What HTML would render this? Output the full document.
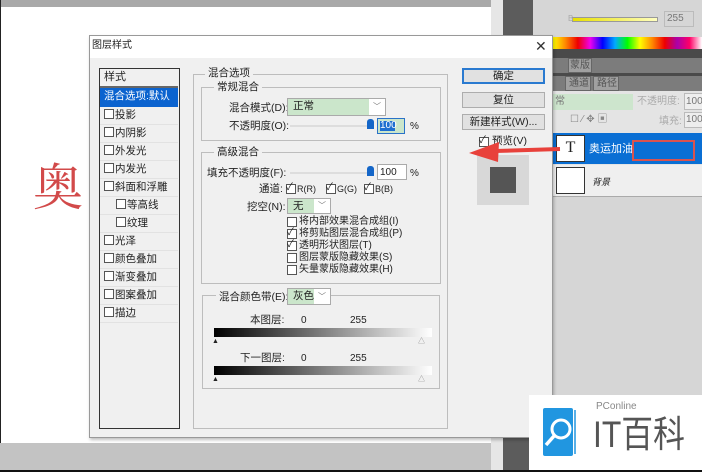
<!DOCTYPE html>
<html><head><meta charset="utf-8"><style>
*{margin:0;padding:0;box-sizing:border-box}
body{width:702px;height:472px;overflow:hidden;position:relative;background:#c9c9c9;font-family:"Liberation Sans","Noto Sans CJK SC",sans-serif;font-size:10px;color:#222}
.a{position:absolute}
.t{position:absolute;white-space:nowrap;font-size:10px;line-height:12px}
.cb{position:absolute;width:10px;height:10px;border:1px solid #555;background:#fff}
.grp{position:absolute;border:1px solid #bdbdbd}
.lbl{position:absolute;background:#f0f0f0;padding:0 3px;font-size:10.5px;line-height:12px;white-space:nowrap}
.btn{position:absolute;left:462px;width:83px;height:16px;border:1px solid #adadad;background:#e1e1e1;text-align:center;font-size:10.5px;line-height:14px}
.row{position:absolute;left:0;width:78px;height:18px;border-bottom:1px solid #e2e2e2;font-size:10.5px;line-height:17px;padding-left:4px;white-space:nowrap}
.row i{display:inline-block;width:10px;height:10px;border:1px solid #555;background:#fff;vertical-align:-1px;margin-right:1px}
.dd{position:absolute;background:#cbe6cb;border:1px solid #aaa;font-size:10.5px;line-height:15px;padding-left:5px}
.dd b{position:absolute;right:0;top:0;width:16px;height:100%;background:#fff;font-weight:normal;color:#777;font-size:8px;text-align:center}
</style></head><body>
<div class="a" style="left:0;top:0;width:702px;height:7px;background:#a9a9a9"></div>
<div class="a" style="left:1px;top:7px;width:490px;height:436px;background:#fff"></div>
<div class="a" style="left:0;top:0;width:1px;height:472px;background:#222"></div>
<div class="a" style="left:0;top:443px;width:530px;height:28px;background:#c3c3c3"></div>
<div class="a" style="left:491px;top:0;width:12px;height:472px;background:#e6e6e6"></div>
<div class="a" style="left:503px;top:0;width:30px;height:472px;background:#5c5c5c"></div>
<div class="t" style="left:33px;top:158px;font-size:50px;line-height:60px;color:#d24a4a;font-family:'Liberation Serif','Noto Serif CJK SC',serif">奥</div>
<div class="a" style="left:533px;top:0;width:169px;height:472px;background:#d6d6d6"></div>
<div class="a" style="left:572px;top:17px;width:86px;height:5px;background:linear-gradient(90deg,#e8e000,#ffffc0);border:1px solid #999"></div>
<div class="t" style="left:568px;top:13px;color:#aaa;font-size:8px">B</div>
<div class="a" style="left:664px;top:11px;width:30px;height:16px;border:1px solid #bbb"></div>
<div class="t" style="left:667px;top:13px;color:#777">255</div>
<div class="a" style="left:553px;top:37px;width:149px;height:12px;background:linear-gradient(90deg,#ff0,#f80,#e00,#e0e,#00f,#0af,#0f0,#ff0,#f80,#e00,#a0a,#f06,#fff)"></div>
<div class="a" style="left:553px;top:49px;width:149px;height:9px;background:#4a4a4a"></div>
<div class="a" style="left:553px;top:58px;width:149px;height:15px;background:#7c7c7c"></div>
<div class="a" style="left:568px;top:58px;width:24px;height:15px;background:#a0a0a0;border:1px solid #666"></div>
<div class="t" style="left:570px;top:60px;color:#555">蒙版</div>
<div class="a" style="left:553px;top:73px;width:149px;height:3px;background:#4a4a4a"></div>
<div class="a" style="left:553px;top:76px;width:149px;height:15px;background:#7c7c7c"></div>
<div class="a" style="left:565px;top:76px;width:26px;height:15px;background:#a0a0a0;border:1px solid #666"></div>
<div class="a" style="left:593px;top:76px;width:26px;height:15px;background:#a0a0a0;border:1px solid #666"></div>
<div class="t" style="left:569px;top:78px;color:#555">通道</div>
<div class="t" style="left:597px;top:78px;color:#555">路径</div>
<div class="a" style="left:553px;top:91px;width:149px;height:106px;background:#e4e4e4"></div>
<div class="a" style="left:553px;top:94px;width:80px;height:16px;background:#cde5cd"></div>
<div class="t" style="left:555px;top:96px;color:#777">常</div>
<div class="t" style="left:637px;top:96px;color:#aaa">不透明度:</div>
<div class="a" style="left:684px;top:93px;width:20px;height:17px;border:1px solid #bbb;background:#eee"></div>
<div class="t" style="left:686px;top:96px;color:#777">100</div>
<div class="t" style="left:570px;top:114px;color:#888">☐ ⁄ ✥ ▣</div>
<div class="t" style="left:659px;top:116px;color:#aaa">填充:</div>
<div class="a" style="left:684px;top:112px;width:20px;height:16px;border:1px solid #bbb;background:#eee"></div>
<div class="t" style="left:686px;top:114px;color:#777">100</div>
<div class="a" style="left:553px;top:133px;width:149px;height:31px;background:#0a6fd4"></div>
<div class="a" style="left:556px;top:135px;width:29px;height:27px;background:#fff;border:1px solid #333;text-align:center;font-family:'Liberation Serif',serif;font-size:16px;line-height:24px">T</div>
<div class="t" style="left:589px;top:143px;color:#fff;font-size:11px">奥运加油</div>
<div class="a" style="left:632px;top:140px;width:63px;height:21px;border:2px solid #d9534f"></div>
<div class="a" style="left:553px;top:165px;width:149px;height:32px;background:#efefef;border-bottom:1px solid #aaa"></div>
<div class="a" style="left:556px;top:167px;width:29px;height:27px;background:#fff;border:1px solid #333"></div>
<div class="t" style="left:592px;top:176px;font-style:italic;font-size:9px">背景</div>
<div class="a" style="left:89px;top:35px;width:464px;height:403px;background:#f0f0f0;border:1px solid #999;box-shadow:1px 2px 3px rgba(0,0,0,.25)"></div>
<div class="a" style="left:90px;top:36px;width:462px;height:22px;background:#fff"></div>
<div class="t" style="left:92px;top:40px">图层样式</div>
<div class="t" style="left:535px;top:38px;font-size:14px;line-height:16px;color:#333">✕</div>
<div class="a" style="left:99px;top:68px;width:81px;height:361px;background:#f0f0f0;border:1px solid #333;overflow:hidden">
<div class="row" style="top:0;height:19px;border-bottom:2px solid #666;font-size:11px">样式</div>
<div class="row" style="top:19px;height:19px;background:#0b63cf;color:#fff;border:none">混合选项:默认</div>
<div class="row" style="top:38px"><i></i>投影</div>
<div class="row" style="top:56px"><i></i>内阴影</div>
<div class="row" style="top:74px"><i></i>外发光</div>
<div class="row" style="top:92px"><i></i>内发光</div>
<div class="row" style="top:110px"><i></i>斜面和浮雕</div>
<div class="row" style="top:128px;padding-left:16px"><i></i>等高线</div>
<div class="row" style="top:146px;padding-left:16px"><i></i>纹理</div>
<div class="row" style="top:164px"><i></i>光泽</div>
<div class="row" style="top:182px"><i></i>颜色叠加</div>
<div class="row" style="top:200px"><i></i>渐变叠加</div>
<div class="row" style="top:218px"><i></i>图案叠加</div>
<div class="row" style="top:236px"><i></i>描边</div>
</div>
<div class="grp" style="left:193px;top:74px;width:255px;height:355px"></div>
<div class="lbl" style="left:205px;top:67px">混合选项</div>
<div class="grp" style="left:201px;top:87px;width:240px;height:54px"></div>
<div class="lbl" style="left:214px;top:81px">常规混合</div>
<div class="t" style="left:229px;top:102px;font-size:10.5px">混合模式(D):</div>
<div class="dd" style="left:287px;top:98px;width:99px;height:18px">正常<b>﹀</b></div>
<div class="t" style="left:229px;top:120px;font-size:10.5px">不透明度(O):</div>
<div class="a" style="left:290px;top:125px;width:80px;height:2px;background:#ddd"></div>
<div class="a" style="left:367px;top:119px;width:7px;height:10px;background:#1466c8;border-radius:3px 3px 0 0"></div>
<div class="a" style="left:377px;top:118px;width:28px;height:16px;border:1px solid #2a72c8;background:#cbe6cb"></div>
<div class="a" style="left:380px;top:121px;width:15px;height:10px;background:#1e6fd0"></div>
<div class="t" style="left:380px;top:120px;color:#fff">100</div>
<div class="t" style="left:410px;top:121px">%</div>
<div class="grp" style="left:201px;top:152px;width:240px;height:132px"></div>
<div class="lbl" style="left:214px;top:146px">高级混合</div>
<div class="t" style="left:207px;top:167px;font-size:10.5px">填充不透明度(F):</div>
<div class="a" style="left:290px;top:172px;width:80px;height:2px;background:#ddd"></div>
<div class="a" style="left:367px;top:166px;width:7px;height:10px;background:#1466c8;border-radius:3px 3px 0 0"></div>
<div class="a" style="left:377px;top:164px;width:30px;height:16px;border:1px solid #aaa;background:#fff"></div>
<div class="t" style="left:380px;top:167px">100</div>
<div class="t" style="left:410px;top:168px">%</div>
<div class="t" style="left:259px;top:183px;font-size:10.5px">通道:</div>
<div class="cb" style="left:286px;top:184px"></div><div class="t" style="left:286px;top:182px">✓</div><div class="t" style="left:297px;top:183px;font-size:9px">R(R)</div>
<div class="cb" style="left:326px;top:184px"></div><div class="t" style="left:326px;top:182px">✓</div><div class="t" style="left:337px;top:183px;font-size:9px">G(G)</div>
<div class="cb" style="left:364px;top:184px"></div><div class="t" style="left:364px;top:182px">✓</div><div class="t" style="left:375px;top:183px;font-size:9px">B(B)</div>
<div class="t" style="left:247px;top:201px;font-size:10.5px">挖空(N):</div>
<div class="dd" style="left:287px;top:198px;width:44px;height:16px;line-height:14px">无<b>﹀</b></div>
<div class="cb" style="left:287px;top:217px"></div><div class="t" style="left:299px;top:216px">将内部效果混合成组(I)</div>
<div class="cb" style="left:287px;top:229px"></div><div class="t" style="left:287px;top:227px">✓</div><div class="t" style="left:299px;top:228px">将剪贴图层混合成组(P)</div>
<div class="cb" style="left:287px;top:241px"></div><div class="t" style="left:287px;top:239px">✓</div><div class="t" style="left:299px;top:240px">透明形状图层(T)</div>
<div class="cb" style="left:287px;top:253px"></div><div class="t" style="left:299px;top:252px">图层蒙版隐藏效果(S)</div>
<div class="cb" style="left:287px;top:265px"></div><div class="t" style="left:299px;top:264px">矢量蒙版隐藏效果(H)</div>
<div class="grp" style="left:202px;top:295px;width:238px;height:94px"></div>
<div class="lbl" style="left:216px;top:291px;font-size:10.5px">混合颜色带(E):</div>
<div class="dd" style="left:287px;top:288px;width:44px;height:17px">灰色<b>﹀</b></div>
<div class="t" style="left:250px;top:314px;font-size:10.5px">本图层:</div>
<div class="t" style="left:301px;top:315px">0</div><div class="t" style="left:350px;top:315px">255</div>
<div class="a" style="left:214px;top:328px;width:218px;height:9px;background:linear-gradient(90deg,#000,#fff)"></div>
<div class="t" style="left:212px;top:336px;font-size:7px">▲</div><div class="t" style="left:418px;top:336px;font-size:7px;color:#888">△</div>
<div class="t" style="left:240px;top:352px;font-size:10.5px">下一图层:</div>
<div class="t" style="left:301px;top:353px">0</div><div class="t" style="left:350px;top:353px">255</div>
<div class="a" style="left:214px;top:366px;width:218px;height:9px;background:linear-gradient(90deg,#000,#fff)"></div>
<div class="t" style="left:212px;top:374px;font-size:7px">▲</div><div class="t" style="left:418px;top:374px;font-size:7px;color:#888">△</div>
<div class="btn" style="top:68px;border:2px solid #2a7ad0;line-height:12px">确定</div>
<div class="btn" style="top:92px">复位</div>
<div class="btn" style="top:114px">新建样式(W)...</div>
<div class="cb" style="left:479px;top:137px"></div><div class="t" style="left:479px;top:135px">✓</div>
<div class="t" style="left:492px;top:135px;font-size:10.5px">预览(V)</div>
<div class="a" style="left:477px;top:155px;width:52px;height:50px;background:#d8d8d8"></div>
<div class="a" style="left:490px;top:167px;width:26px;height:26px;background:#555"></div>
<svg class="a" style="left:465px;top:138px" width="100" height="28"><path d="M95 11 L30 13" stroke="#e8413b" stroke-width="4" fill="none"/><path d="M4 15 L34 4 L33 24 Z" fill="#e8413b"/></svg>
<div class="a" style="left:529px;top:395px;width:173px;height:75px;background:#fff"></div>
<svg class="a" style="left:540px;top:405px" width="40" height="55"><rect x="3" y="3" width="30" height="48" rx="2" fill="#2196e0"/><path d="M35 5 V49" stroke="#2196e0" stroke-width="1.5"/><circle cx="21" cy="24" r="9" fill="none" stroke="#fff" stroke-width="3"/><path d="M14 31 L6 40" stroke="#fff" stroke-width="3.5"/></svg>
<div class="t" style="left:596px;top:401px;font-size:10px;color:#888">PConline</div>
<div class="t" style="left:593px;top:414px;font-size:37px;line-height:42px;color:#555;transform:scaleX(0.86);transform-origin:left top">IT百科</div>
<div class="a" style="left:0;top:470px;width:702px;height:2px;background:#111"></div>
</body></html>
